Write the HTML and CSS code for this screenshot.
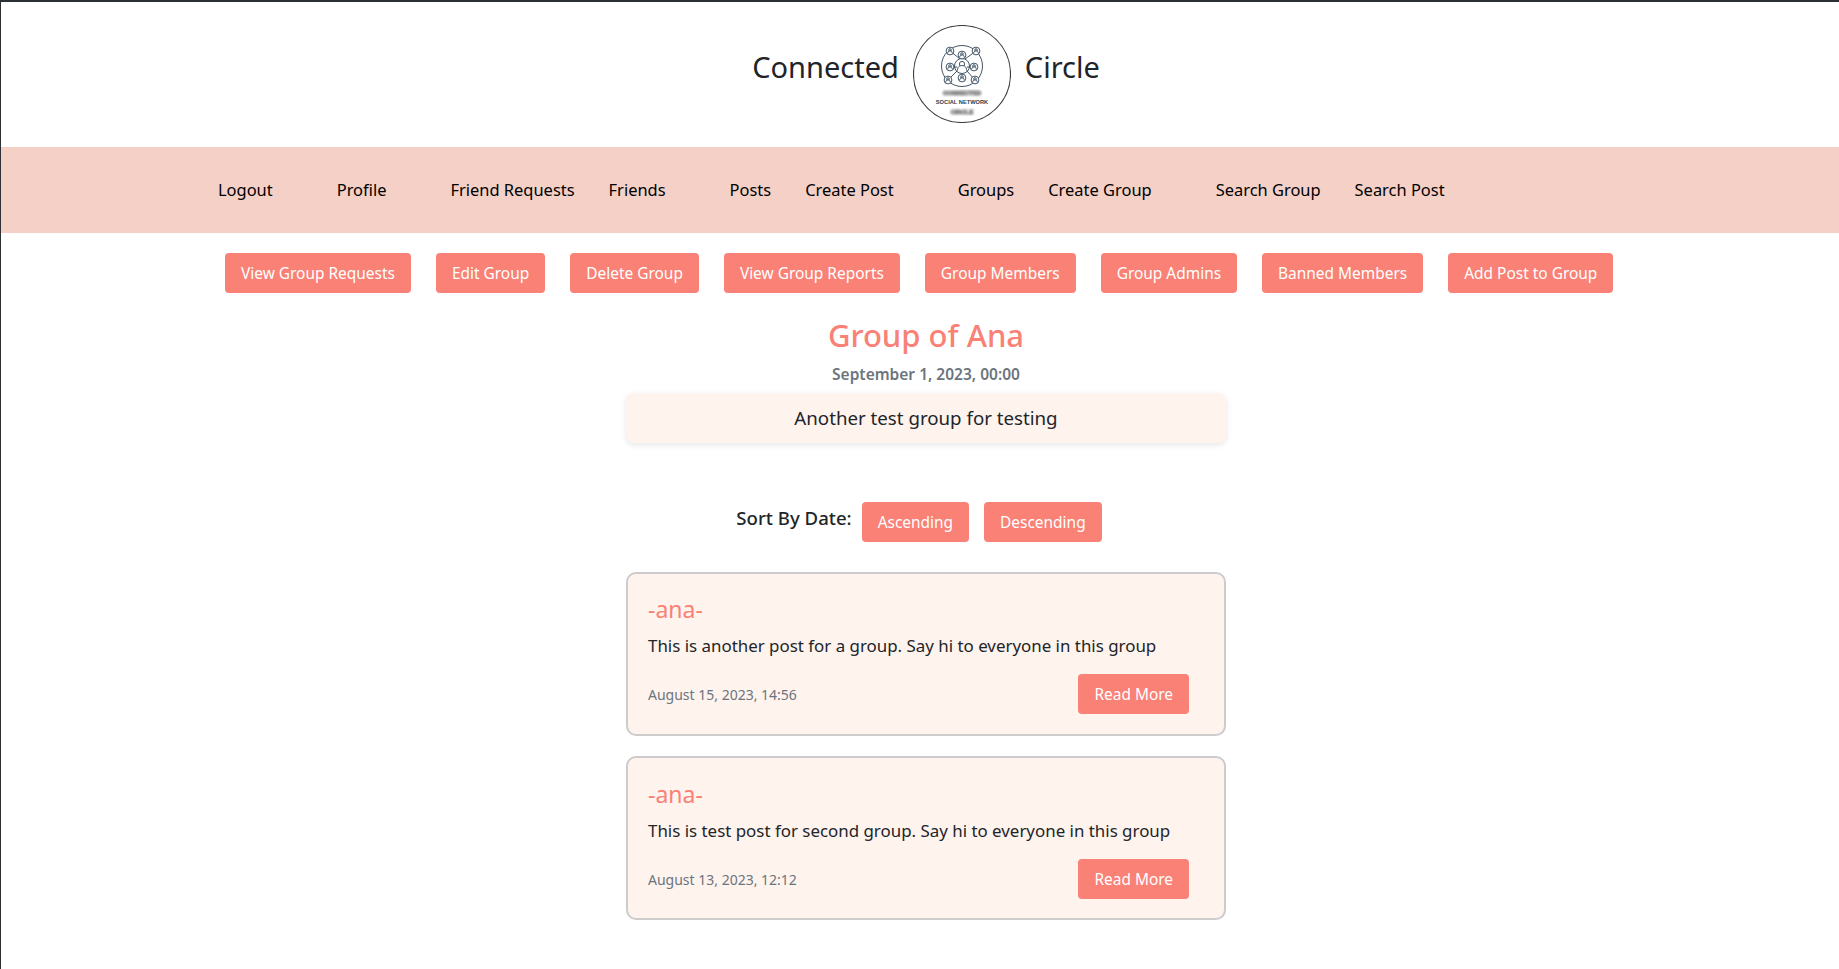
FILE: index.html
```html
<!DOCTYPE html>
<html lang="en">
<head>
    <meta charset="UTF-8">
    <meta name="viewport" content="width=device-width, initial-scale=1.0">
    <title>Group of Ana</title>
    <link rel="stylesheet" href="styles.css">
</head>
<body>

    <header class="site-header">
        <span class="brand-word">Connected</span>
        <svg class="logo" viewBox="0 0 98 98" role="img" aria-label="Connected Circle logo">
            <defs>
                <filter id="smudge"><feGaussianBlur stdDeviation="0.8"/></filter>
                <g id="member">
                    <circle r="3.9"/>
                    <circle cy="-1" r="1.3"/>
                    <path d="M-2.3 2.5c0-2 1-2.5 2.3-2.5s2.3.5 2.3 2.5"/>
                </g>
            </defs>
            <circle class="logo-ring" cx="49" cy="49" r="48.5"/>
            <g class="logo-net" transform="translate(49 41)">
                <circle r="20.5"/>
                <circle r="7.5"/>
                <circle cy="-2" r="2.6"/>
                <path d="M-4.6 4.6c0-4 2-5 4.6-5s4.6 1 4.6 5"/>
                <path d="M-12-15L-2-7M14-15L3-7M-14 14L-5 5M13 14L5 5M-8 1H-5M8 1H5"/>
                <use href="#member" x="-12" y="-15"/>
                <use href="#member" x="14" y="-15"/>
                <use href="#member" x="-14" y="14"/>
                <use href="#member" x="13" y="14"/>
                <use href="#member" x="0" y="-11"/>
                <use href="#member" x="-12" y="1"/>
                <use href="#member" x="12" y="1"/>
                <use href="#member" x="0" y="12"/>
            </g>
            <text class="logo-text logo-blur" x="49" y="70" filter="url(#smudge)">CONNECTED</text>
            <text class="logo-text" x="49" y="79">SOCIAL NETWORK</text>
            <text class="logo-text logo-blur" x="49" y="88.5" filter="url(#smudge)">CIRCLE</text>
        </svg>
        <span class="brand-word">Circle</span>
    </header>

    <nav class="main-nav">
        <a href="#" class="nav-end">Logout</a>
        <a href="#" class="nav-end">Profile</a>
        <a href="#">Friend Requests</a>
        <a href="#" class="nav-end">Friends</a>
        <a href="#">Posts</a>
        <a href="#" class="nav-end">Create Post</a>
        <a href="#">Groups</a>
        <a href="#" class="nav-end">Create Group</a>
        <a href="#">Search Group</a>
        <a href="#">Search Post</a>
    </nav>

    <div class="group-actions">
        <a href="#" class="btn">View Group Requests</a>
        <a href="#" class="btn">Edit Group</a>
        <a href="#" class="btn">Delete Group</a>
        <a href="#" class="btn">View Group Reports</a>
        <a href="#" class="btn">Group Members</a>
        <a href="#" class="btn">Group Admins</a>
        <a href="#" class="btn">Banned Members</a>
        <a href="#" class="btn">Add Post to Group</a>
    </div>

    <main>
        <h1 class="group-title">Group of Ana</h1>
        <p class="group-date">September 1, 2023, 00:00</p>
        <p class="group-description">Another test group for testing</p>

        <div class="sort-bar">
            <span class="sort-label">Sort By Date:</span>
            <a href="#" class="btn">Ascending</a>
            <a href="#" class="btn">Descending</a>
        </div>

        <article class="post-card">
            <h2 class="post-author">-ana-</h2>
            <p class="post-text">This is another post for a group. Say hi to everyone in this group</p>
            <div class="post-footer">
                <span class="post-date">August 15, 2023, 14:56</span>
                <a href="#" class="btn">Read More</a>
            </div>
        </article>

        <article class="post-card">
            <h2 class="post-author">-ana-</h2>
            <p class="post-text">This is test post for second group. Say hi to everyone in this group</p>
            <div class="post-footer">
                <span class="post-date">August 13, 2023, 12:12</span>
                <a href="#" class="btn">Read More</a>
            </div>
        </article>
    </main>

</body>
</html>
```

FILE: styles.css
```css
/* Basic Reset */
* {
    margin: 0;
    padding: 0;
    box-sizing: border-box;
}

html, body {
    height: 100%;
}

body {
    font-family: 'Noto Sans', 'Open Sans', sans-serif;
    font-size: 15px;
    color: #212529;
    background-color: #fff;
    border-top: 2px solid #2b3035;
    border-left: 1px solid #2b3035;
    overflow: hidden;
}

a {
    text-decoration: none;
}

/* Header */
.site-header {
    height: 145px;
    display: flex;
    justify-content: center;
    align-items: flex-start;
    padding-top: 23px;
    padding-left: 12px;
    gap: 14px;
}

.brand-word {
    font-size: 29px;
    line-height: 42px;
    margin-top: 21px;
    color: #212529;
}

.logo {
    width: 98px;
    height: 98px;
}

.logo-ring {
    fill: none;
    stroke: #3c3c3c;
    stroke-width: 1.1;
}

.logo-net {
    fill: #fff;
    stroke: #2f4458;
    stroke-width: 0.9;
}

.logo-text {
    font-family: 'Liberation Sans', sans-serif;
    font-size: 5.7px;
    font-weight: bold;
    fill: #2c3e50;
    text-anchor: middle;
}

.logo-blur {
    fill: #777;
    stroke: #888;
    stroke-width: 1;
    font-size: 6px;
}

/* Navigation */
.main-nav {
    height: 86px;
    display: flex;
    align-items: center;
    padding-left: 200px;
    padding-bottom: 2px;
    font-size: 16.45px;
    background-color: #f4d0c7;
}

.main-nav a {
    color: #000;
    padding: 0 17px;
    white-space: nowrap;
}

.main-nav a.nav-end {
    margin-right: 30px;
}

/* Buttons */
.btn {
    display: inline-block;
    height: 40px;
    line-height: 40px;
    padding: 0 16px;
    color: #fff;
    font-size: 15.45px;
    white-space: nowrap;
    background-color: #f98176;
    border-radius: 4px;
}

.group-actions {
    display: flex;
    gap: 25px;
    margin-top: 20px;
    padding-left: 224px;
}

/* Group details */
main {
    width: 600px;
    margin-left: 625px;
    display: flex;
    flex-direction: column;
    align-items: center;
}

.group-title {
    margin-top: 23px;
    font-size: 31px;
    line-height: 38px;
    font-weight: 500;
    color: #f98176;
    white-space: nowrap;
}

.group-date {
    margin-top: 10px;
    line-height: 21px;
    font-size: 15.5px;
    font-weight: 600;
    color: #6c757d;
}

.group-description {
    width: 100%;
    height: 50px;
    margin-top: 8px;
    line-height: 50px;
    font-size: 18.7px;
    text-align: center;
    background-color: #fff3ee;
    border-radius: 8px;
    box-shadow: 0 2px 6px rgba(0, 0, 0, 0.1);
}

.sort-bar {
    display: flex;
    gap: 15px;
    margin-top: 59px;
    margin-right: 14px;
}

.sort-label {
    margin-right: -5px;
    line-height: 31px;
    font-size: 18.6px;
    font-weight: 500;
}

/* Post cards */
.post-card {
    width: 100%;
    height: 164px;
    margin-top: 30px;
    padding: 19px 35px 0 20px;
    background-color: #fff3ee;
    border: 2px solid #ccc;
    border-radius: 10px;
}

.post-card + .post-card {
    margin-top: 20px;
    padding-top: 20px;
}

.post-author {
    font-size: 23px;
    line-height: 32px;
    font-weight: 400;
    color: #f98176;
}

.post-text {
    margin-top: 9px;
    line-height: 24px;
    font-size: 16.9px;
}

.post-footer {
    display: flex;
    justify-content: space-between;
    align-items: center;
    margin-top: 16px;
}

.post-date {
    font-size: 14px;
    color: #6c757d;
}
```
